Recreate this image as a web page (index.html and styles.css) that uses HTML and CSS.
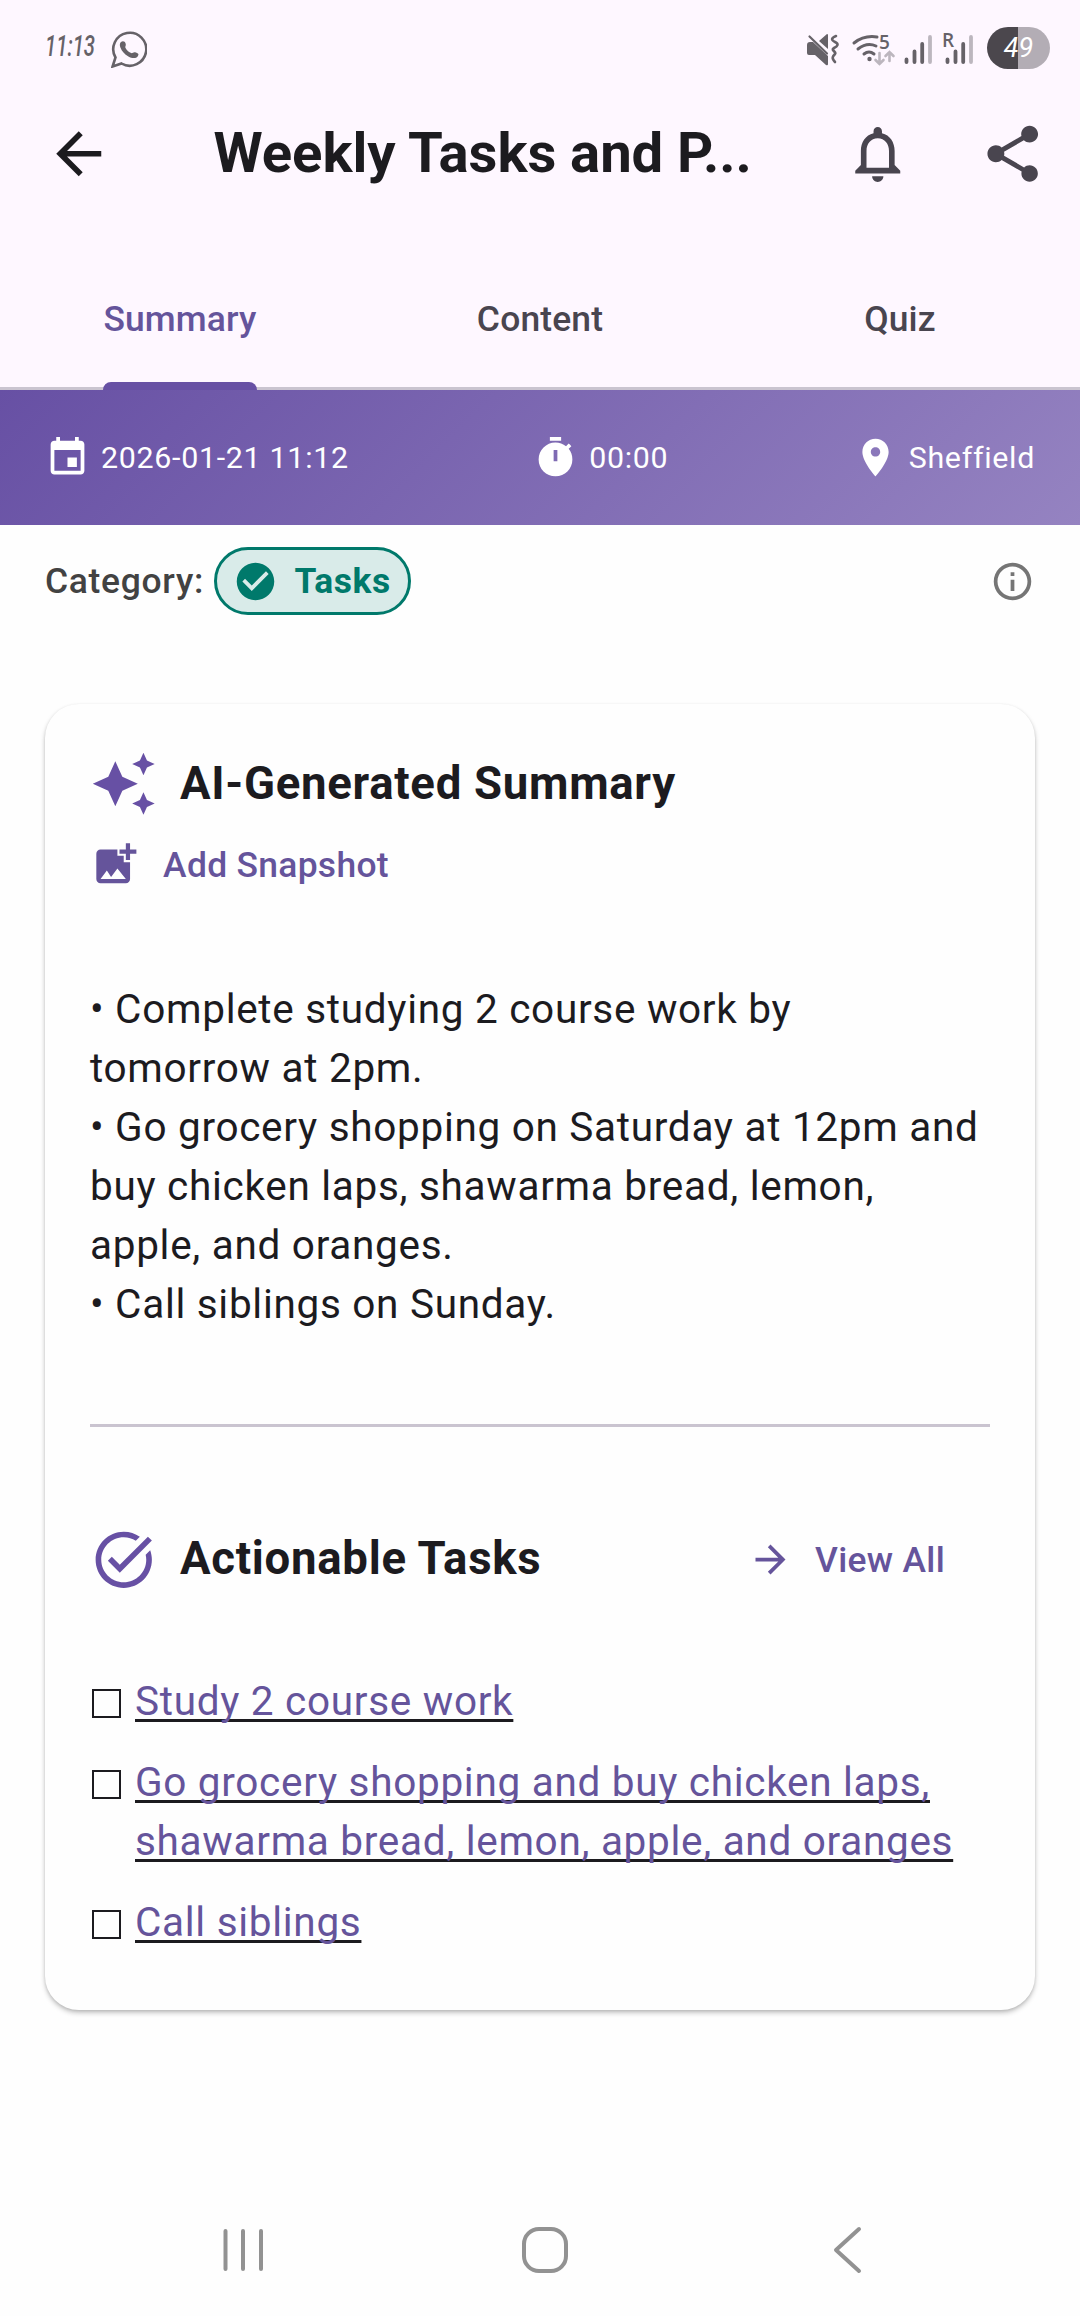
FILE: index.html
```html
<!DOCTYPE html>
<html lang="en">
<head>
  <meta charset="UTF-8" />
  <meta name="viewport" content="width=device-width,initial-scale=1.0" />
  <title>Weekly Tasks and Plans</title>
  <link rel="stylesheet" href="styles.css">
</head>
<body>
  <header class="top">
    <div class="status-bar">
      <div class="status-left">
        <span class="clock"><span>11:13</span></span>
        <svg class="whatsapp" viewBox="0 0 36 37" width="36" height="37">
          <path d="M1.600 35.500 4.500 26.500A16.500 16.500 0 1 1 10.500 32.500Z" fill="none" stroke="#666268" stroke-width="2.600"/>
          <path d="M10 11c2-1.500 4-.5 4.600 1.500.8 2-.8 3-.2 4.200 1.600 3 3.600 4.400 5.800 5.400 1.400.4 2.200-1.400 4-.8 3 1 4 1.600 2.800 3.600-2 3-6 2.600-9.600.6-3.800-2.200-6.600-5.200-8-9-.8-2.200-.8-4.200.6-5.500z" fill="#666268"/>
        </svg>
      </div>
      <div class="status-right">
        <svg class="status-icons" viewBox="0 0 170 44" width="170" height="44">
          <!-- muted / vibrate -->
          <path d="M2 18q0-3 3-3h3l15 14v8q0 2-2 1L10 28H4q-2 0-2-2z M14 14l8-7q1 0 1 1v14z" fill="#666268"/>
          <path d="M4.500 9.500 22 26.500" stroke="#666268" stroke-width="2.200" stroke-linecap="round"/>
          <path d="M31 9c-5 2-5 4-1 6s3 4-1 6 3 4 1 6-4 4 0 8" fill="none" stroke="#666268" stroke-width="2.600" stroke-linecap="round"/>
          <!-- wifi -->
          <g fill="none" stroke="#666268" stroke-width="3" stroke-linecap="round">
            <path d="M49 16q10-8 23-6M53 22q9-7 18-3M59 27q5-4 10 0"/>
          </g>
          <circle cx="64.500" cy="32" r="2.200" fill="#666268"/>
          <g fill="none" stroke="#bcb6be" stroke-width="2.600" stroke-linecap="round">
            <path d="M74.500 26v11m-4-4 4 4 4-4M84.500 34V25m-4 4 4-4 4 4"/>
          </g>
          <text class="badge-five" x="74" y="21.500">5</text>
          <!-- signal 1 and 2 -->
          <g stroke-width="3.800" stroke-linecap="round">
            <path d="M101.500 32.500v2.500M109.500 24.500V35M117.200 17v18" stroke="#666268"/>
            <path d="M125 10v25" stroke="#bcb6be"/>
            <path d="M142.500 32.500v2.500M150.500 24.500V35M158.200 17v18" stroke="#666268"/>
            <path d="M166 10v25" stroke="#bcb6be"/>
          </g>
          <text class="badge-r" x="137" y="20">R</text>
        </svg>
        <span class="battery">49</span>
      </div>
    </div>

    <div class="toolbar">
      <svg class="icon-lg back" viewBox="0 0 24 24"><path d="M20 11H7.830l5.590-5.590L12 4l-8 8 8 8 1.410-1.410L7.830 13H20v-2z"/></svg>
      <h1>Weekly Tasks and P...</h1>
      <svg class="icon-lg bell" viewBox="0 0 24 24"><path d="M12 22c1.100 0 2-.9 2-2h-4c0 1.100.9 2 2 2zm6-6v-5c0-3.070-1.630-5.640-4.500-6.320V4c0-.83-.67-1.500-1.500-1.500s-1.500.67-1.500 1.500v.68C7.640 5.360 6 7.920 6 11v5l-2 2v1h16v-1l-2-2zm-2 1H8v-6c0-2.480 1.510-4.500 4-4.500s4 2.020 4 4.500v6z"/></svg>
      <svg class="icon-lg share" viewBox="0 0 24 24"><path d="M18 16.080c-.76 0-1.440.3-1.960.77L8.910 12.700c.05-.23.090-.46.090-.7s-.04-.47-.09-.7l7.050-4.110c.54.5 1.250.81 2.040.81 1.660 0 3-1.340 3-3s-1.340-3-3-3-3 1.340-3 3c0 .24.040.47.090.7L8.040 9.810C7.500 9.310 6.790 9 6 9c-1.660 0-3 1.340-3 3s1.340 3 3 3c.79 0 1.500-.31 2.040-.81l7.120 4.160c-.05.21-.08.43-.08.65 0 1.610 1.310 2.920 2.920 2.920s2.920-1.310 2.920-2.920-1.310-2.920-2.920-2.920z"/></svg>
    </div>

    <nav class="tabs">
      <a class="tab active"><span>Summary</span></a>
      <a class="tab"><span>Content</span></a>
      <a class="tab"><span>Quiz</span></a>
    </nav>
  </header>

  <section class="meta">
    <div class="meta-item">
      <svg class="icon-sm" viewBox="0 0 24 24"><path d="M17 12h-5v5h5v-5zM16 1v2H8V1H6v2H5c-1.110 0-1.990.9-1.990 2L3 19c0 1.100.89 2 2 2h14c1.100 0 2-.9 2-2V5c0-1.100-.9-2-2-2h-1V1h-2zm3 18H5V8h14v11z"/></svg>
      <span>2026-01-21 11:12</span>
    </div>
    <div class="meta-item">
      <svg class="icon-sm" viewBox="0 0 24 24"><path d="M15 1H9v2h6V1zm4.030 6.390l1.420-1.420c-.43-.51-.9-.99-1.410-1.410l-1.420 1.420C16.070 4.740 14.120 4 12 4c-4.970 0-9 4.030-9 9s4.020 9 9 9 9-4.030 9-9c0-2.120-.74-4.070-1.970-5.610zM13 14h-2V8h2v6z"/></svg>
      <span>00:00</span>
    </div>
    <div class="meta-item">
      <svg class="icon-sm" viewBox="0 0 24 24"><path d="M12 2C8.130 2 5 5.130 5 9c0 5.250 7 13 7 13s7-7.750 7-13c0-3.870-3.130-7-7-7zm0 9.500c-1.380 0-2.500-1.120-2.500-2.500s1.120-2.500 2.500-2.500 2.500 1.120 2.500 2.500-1.120 2.500-2.500 2.500z"/></svg>
      <span>Sheffield</span>
    </div>
  </section>

  <section class="category">
    <span class="category-label">Category:</span>
    <span class="chip">
      <svg class="icon-sm" viewBox="0 0 24 24"><path d="M12 2C6.480 2 2 6.480 2 12s4.480 10 10 10 10-4.480 10-10S17.520 2 12 2zm-2 15l-5-5 1.410-1.410L10 14.170l7.590-7.590L19 8l-9 9z"/></svg>
      Tasks
    </span>
    <svg class="icon-sm info" viewBox="0 0 24 24"><path d="M11 7h2v2h-2zm0 4h2v6h-2zm1-9C6.480 2 2 6.480 2 12s4.480 10 10 10 10-4.480 10-10S17.520 2 12 2zm0 18c-4.410 0-8-3.590-8-8s3.590-8 8-8 8 3.590 8 8-3.590 8-8 8z"/></svg>
  </section>

  <main class="card">
    <div class="card-title">
      <svg class="icon-lg" viewBox="0 0 24 24"><path d="M19 9l1.250-2.750L23 5l-2.750-1.250L19 1l-1.250 2.750L15 5l2.750 1.250L19 9zm-7.500.5L9 4 6.500 9.500 1 12l5.500 2.500L9 20l2.500-5.500L17 12l-5.500-2.500zM19 15l-1.250 2.750L15 19l2.750 1.250L19 23l1.250-2.750L23 19l-2.750-1.250L19 15z"/></svg>
      <h2>AI-Generated Summary</h2>
    </div>
    <a class="snapshot">
      <svg class="icon-md" viewBox="0 0 24 24"><path d="M19 7v2.990s-1.990.010-2 0V7h-3s.010-1.990 0-2h3V2h2v3h3v2h-3zm-3 4V8h-3V5H5c-1.100 0-2 .9-2 2v12c0 1.100.9 2 2 2h12c1.100 0 2-.9 2-2v-8h-3zM5 19l3-4 2 3 3-4 4 5H5z"/></svg>
      Add Snapshot
    </a>

    <p class="summary">
      • Complete studying 2 course work by<br>
      tomorrow at 2pm.<br>
      • Go grocery shopping on Saturday at 12pm and buy chicken laps, shawarma bread, lemon, apple, and oranges.<br>
      • Call siblings on Sunday.
    </p>

    <hr>

    <div class="card-title tasks-title">
      <svg class="icon-lg" viewBox="0 0 24 24"><path d="M22 5.180L10.590 16.600l-4.240-4.240 1.410-1.410 2.830 2.830 10-10L22 5.180zm-2.210 5.040c.13.570.21 1.170.21 1.780 0 4.420-3.580 8-8 8s-8-3.580-8-8 3.580-8 8-8c1.580 0 3.040.46 4.280 1.250l1.440-1.440C16.100 2.670 14.130 2 12 2 6.480 2 2 6.480 2 12s4.480 10 10 10 10-4.480 10-10c0-1.190-.22-2.330-.6-3.390l-1.610 1.610z"/></svg>
      <h2>Actionable Tasks</h2>
      <a class="view-all">
        <svg class="icon-sm" viewBox="0 0 24 24"><path d="M12 4l-1.410 1.410L16.170 11H4v2h12.170l-5.580 5.590L12 20l8-8z"/></svg>
        View All
      </a>
    </div>

    <ul class="tasks">
      <li><span class="box"></span><a>Study 2 course work</a></li>
      <li><span class="box"></span><a>Go grocery shopping and buy chicken laps, shawarma bread, lemon, apple, and oranges</a></li>
      <li><span class="box"></span><a>Call siblings</a></li>
    </ul>
  </main>

  <footer class="nav-bar">
    <svg width="46" height="50" viewBox="0 0 46 50"><path d="M5.500 6v38M23 6v38M41 6v38"/></svg>
    <svg width="50" height="50" viewBox="0 0 50 50"><rect x="4" y="4" width="42" height="42" rx="15"/></svg>
    <svg width="40" height="50" viewBox="0 0 40 50"><path d="M35 4 12 25l23 21"/></svg>
  </footer>
</body>
</html>
```

FILE: styles.css
```css
* {
  box-sizing: border-box;
}
body {
  margin: 0;
  width: 1080px;
  height: 2316px;
  background: #fefefe;
  color: #1c1b1f;
  font-family: Roboto, "Liberation Sans", sans-serif;
  display: flex;
  flex-direction: column;
}
svg {
  flex: none;
}
h1, h2, p, ul {
  margin: 0;
  padding: 0;
}
.icon-lg {
  width: 67.5px;
  height: 67.5px;
  fill: #6750a4;
}
.icon-md {
  width: 50.6px;
  height: 50.6px;
  fill: currentColor;
}
.icon-sm {
  width: 45px;
  height: 45px;
  fill: currentColor;
}

/* header */
.top {
  background: #fef7ff;
  height: 390px;
  display: flex;
  flex-direction: column;
}
.status-bar {
  height: 75px;
  padding: 27px 30px 0 45px;
  display: flex;
  justify-content: space-between;
  align-items: flex-start;
}
.status-left, .status-right {
  display: flex;
}
.clock {
  width: 66px;
  font-size: 29px;
  line-height: 39px;
  font-style: italic;
  font-weight: 500;
  color: #666268;
}
.clock span {
  display: inline-block;
  transform: scaleX(0.7);
  transform-origin: left;
}
.whatsapp {
  margin-top: 4px;
}
.status-icons {
  margin-right: 12px;
}
.badge-five, .badge-r {
  font-family: "Open Sans", sans-serif;
  font-weight: 600;
  font-size: 19px;
  fill: #666268;
}
.battery {
  width: 63px;
  height: 42px;
  border-radius: 21px;
  background: linear-gradient(90deg, #4b474d 49%, #b3adb5 49%);
  color: #fff;
  font-size: 27px;
  font-style: italic;
  line-height: 42px;
  text-align: center;
}
.toolbar {
  height: 157.5px;
  padding: 0 34px 0 45px;
  display: flex;
  align-items: center;
}
.toolbar h1 {
  flex: 1;
  margin: -1px 0 0 101px;
  font-size: 56.25px;
  font-weight: 700;
  line-height: 72px;
  letter-spacing: -0.07px;
  white-space: nowrap;
}
.toolbar .back {
  fill: #1c1b1f;
}
.bell, .share {
  fill: #49454f;
}
.bell {
  margin-right: 67px;
}
.tabs {
  flex: 1;
  display: flex;
  border-bottom: 3px solid #cac4d0;
}
.tab {
  flex: 1;
  display: flex;
  justify-content: center;
  font-size: 35.44px;
  font-weight: 500;
  letter-spacing: 0.15px;
  color: #49454f;
}
.tab span {
  height: 157.5px;
  margin-bottom: -3px;
  line-height: 172px;
}
.tab.active {
  color: #65549b;
}
.tab.active span {
  position: relative;
}
.tab.active span::after {
  content: "";
  position: absolute;
  left: 0;
  right: 0;
  bottom: 0;
  height: 8.5px;
  border-radius: 8px 8px 0 0;
  background: #6750a4;
}

/* recording info */
.meta {
  height: 135px;
  padding: 0 45px;
  display: flex;
  justify-content: space-between;
  align-items: center;
  background: linear-gradient(135deg, #6750a4, #9583c1);
  color: #fff;
  font-size: 30.38px;
  line-height: 45px;
  letter-spacing: 0.7px;
}
.meta-item {
  display: flex;
  align-items: center;
  gap: 11px;
}
.meta-item span {
  margin-top: -1px;
}

/* category */
.category {
  height: 112px;
  padding: 0 45px;
  display: flex;
  align-items: center;
}
.category-label {
  color: #424242;
  font-size: 35.44px;
  font-weight: 500;
  letter-spacing: 0.7px;
}
.chip {
  height: 68px;
  margin-left: 9.5px;
  padding: 0 17px 0 16px;
  display: flex;
  align-items: center;
  gap: 17px;
  border: 3px solid #00796b;
  border-radius: 34px;
  background: #d9ebe9;
  color: #00796b;
  font-size: 35.44px;
  font-weight: 700;
  letter-spacing: 0.5px;
}
.info {
  margin-left: auto;
  color: #757575;
}

/* summary card */
.card {
  height: 1306px;
  margin: 67px 45px 0;
  padding: 46px 45px 0;
  border-radius: 34px;
  background: #fefefe;
  box-shadow: 0 3px 5px rgba(0, 0, 0, 0.22), 0 1px 3px rgba(0, 0, 0, 0.1);
}
.card-title {
  display: flex;
  align-items: center;
  gap: 22.5px;
}
.card-title h2 {
  margin-top: -1px;
  font-size: 45.56px;
  font-weight: 700;
  line-height: 67.5px;
  letter-spacing: 0.7px;
}
.snapshot, .view-all {
  display: flex;
  align-items: center;
  gap: 22.5px;
  color: #65549b;
  font-size: 35.44px;
  font-weight: 500;
  letter-spacing: 0.3px;
}
.snapshot {
  height: 94px;
}
.summary {
  margin-top: 68px;
  font-size: 40.5px;
  line-height: 59.06px;
  letter-spacing: 0.7px;
}
.card hr {
  height: 3px;
  margin: 90px 0 99px;
  border: 0;
  background: #cac4d0;
}
.view-all {
  margin: 0 45px 0 auto;
}
.tasks {
  margin-top: 78.5px;
  list-style: none;
  font-size: 40.5px;
  line-height: 59.06px;
  letter-spacing: 0.7px;
}
.tasks li {
  display: flex;
  margin-bottom: 22px;
}
.tasks a {
  color: #65549b;
  text-decoration: underline #1c1b1f 2.5px;
  text-decoration-skip-ink: none;
  text-underline-offset: 4px;
}
.box {
  flex: none;
  width: 29px;
  height: 29px;
  margin: 17px 14px 0 2px;
  border: 2px solid #1c1b1f;
}

/* system navigation */
.nav-bar {
  margin-top: auto;
  height: 91px;
  padding-left: 220px;
  display: flex;
}
.nav-bar svg {
  fill: none;
  stroke: #929292;
  stroke-width: 4;
  stroke-linecap: round;
  stroke-linejoin: round;
}
.nav-bar svg + svg {
  margin-left: 254px;
}
```
